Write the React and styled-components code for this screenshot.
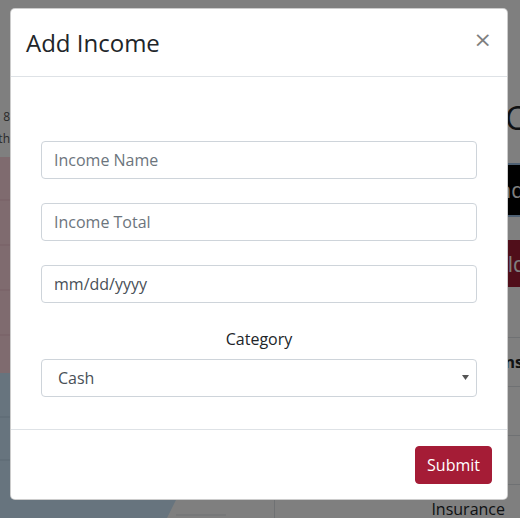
import React from "react";
import styled, { createGlobalStyle } from "styled-components";

const Global = createGlobalStyle`
  html, body { margin: 0; padding: 0; }
  body {
    width: 520px;
    height: 518px;
    overflow: hidden;
    background: #fff;
    font-family: "Segoe UI", "Open Sans", "Noto Sans", sans-serif;
    color: #212529;
  }
  #root { width: 520px; height: 518px; position: relative; overflow: hidden; }
`;

/* ---------- background page ---------- */
const Page = styled.div`
  display: flex;
  align-items: flex-start;
  width: 780px;
`;

const LeftCol = styled.div`
  width: 275px;
  flex-shrink: 0;
  padding-top: 106px;
  box-sizing: border-box;
  display: flex;
  flex-direction: column;
`;

const LegendItem = styled.div`
  width: 10px;
  display: flex;
  justify-content: flex-end;
  white-space: nowrap;
  font-size: 12px;
  line-height: 22px;
  color: #555;
`;

const Chart = styled.svg`
  display: block;
  flex-shrink: 0;
  margin-top: 7px;
`;

const RightCol = styled.div`
  flex: 1;
  display: flex;
  flex-direction: column;
  padding-top: 96px;
`;

const Heading = styled.h2`
  margin: 0 0 0 230px;
  font-size: 32px;
  line-height: 44px;
  font-weight: 500;
  white-space: nowrap;
  flex-shrink: 0;
`;

const BgButton = styled.div`
  flex-shrink: 0;
  margin: ${(p) => p.$mt}px 0 0 150px;
  width: 260px;
  height: ${(p) => p.$h}px;
  box-sizing: border-box;
  padding-left: ${(p) => p.$pl}px;
  background: ${(p) => p.$bg};
  color: #fff;
  font-size: 21px;
  display: flex;
  align-items: center;
  border-radius: 4px;
  white-space: nowrap;
  box-shadow: ${(p) => (p.$ring ? "0 0 0 2px #9cc0e6" : "none")};
`;

const Table = styled.div`
  flex-shrink: 0;
  margin-top: 50px;
  display: flex;
  flex-direction: column;
`;

const Row = styled.div`
  height: 48px;
  flex-shrink: 0;
  border-top: 1px solid #dee2e6;
  border-left: ${(p) => (p.$edge ? "1px solid #dee2e6" : "0")};
  margin-left: ${(p) => (p.$edge ? "-1px" : "0")};
  display: flex;
  align-items: center;
  font-weight: ${(p) => (p.$head ? 700 : 400)};
  font-size: 16px;
  white-space: nowrap;
`;

const Cell = styled.div`
  width: ${(p) => p.$w}px;
  flex-shrink: 0;
  text-align: ${(p) => p.$align || "left"};
`;

const Backdrop = styled.div`
  position: absolute;
  inset: 0;
  background: rgba(0, 0, 0, 0.5);
`;

/* ---------- modal ---------- */
const Modal = styled.div`
  position: absolute;
  top: 8px;
  left: 10px;
  width: 498px;
  background: #fff;
  border: 1px solid rgba(0, 0, 0, 0.2);
  border-radius: 5px;
  box-sizing: border-box;
  display: flex;
  flex-direction: column;
`;

const Header = styled.div`
  display: flex;
  align-items: flex-start;
  justify-content: space-between;
  padding: 16px 16px 15px 15px;
  border-bottom: 1px solid #dee2e6;
`;

const Title = styled.h5`
  margin: 0;
  font-size: 24px;
  line-height: 36px;
  font-weight: 500;
  color: #212529;
`;

const Close = styled.button`
  border: 0;
  background: transparent;
  padding: 0;
  margin: -3px -1px 0 0;
  font-family: "DejaVu Sans", sans-serif;
  font-size: 22px;
  line-height: 36px;
  font-weight: 400;
  color: #000;
  opacity: 0.5;
  cursor: pointer;
`;

const Body = styled.form`
  padding: 64px 30px 32px 30px;
  display: flex;
  flex-direction: column;
  gap: 24px;
`;

const Field = styled.div`
  display: flex;
  flex-direction: column;
`;

const Label = styled.label`
  text-align: center;
  font-size: 16px;
  line-height: 24px;
  margin-bottom: 8px;
  color: #212529;
`;

const Input = styled.input`
  box-sizing: border-box;
  height: 38px;
  width: 100%;
  padding: 6px 12px;
  font-family: inherit;
  font-size: 16px;
  line-height: 24px;
  color: #495057;
  border: 1px solid #ced4da;
  border-radius: 4px;
  background: #fff;
  outline: none;
  &::placeholder {
    color: ${(p) => (p.$darkHint ? "#495057" : "#6c757d")};
    opacity: 1;
  }
`;

const SelectWrap = styled.div`
  position: relative;
`;

const Select = styled.select`
  box-sizing: border-box;
  height: 38px;
  width: 100%;
  padding: 6px 12px 6px 16px;
  font-family: inherit;
  font-size: 16px;
  color: #495057;
  border: 1px solid #ced4da;
  border-radius: 4px;
  background: #fff;
  appearance: none;
  -webkit-appearance: none;
  outline: none;
`;

const Arrow = styled.svg`
  position: absolute;
  right: 8px;
  top: 16px;
  pointer-events: none;
`;

const Footer = styled.div`
  border-top: 1px solid #dee2e6;
  padding: 16px 15px 15px 16px;
  display: flex;
  justify-content: flex-end;
`;

const Submit = styled.button`
  height: 38px;
  padding: 6px 11px;
  font-family: inherit;
  font-size: 16px;
  line-height: 24px;
  color: #fff;
  background: #a51c36;
  border: 1px solid #a51c36;
  border-radius: 4px;
  cursor: pointer;
`;

export default function App() {
  return (
    <>
      <Global />
      <Page>
        <LeftCol>
          <LegendItem>Food &amp; 8</LegendItem>
          <LegendItem>Health</LegendItem>
          <Chart width="275" height="361" viewBox="0 0 275 361">
            <rect x="0" y="0" width="275" height="216" fill="#ffd6df" />
            <line x1="0" y1="43" x2="275" y2="43" stroke="#eebfca" />
            <line x1="0" y1="88" x2="275" y2="88" stroke="#eebfca" />
            <line x1="0" y1="133" x2="275" y2="133" stroke="#eebfca" />
            <line x1="0" y1="178" x2="275" y2="178" stroke="#eebfca" />
            <path d="M0 216 L275 216 L275 333 L181 333 L167 361 L0 361 Z" fill="#cfe9fd" />
            <line x1="0" y1="260" x2="275" y2="260" stroke="#b6d0e4" />
            <line x1="0" y1="303" x2="275" y2="303" stroke="#b6d0e4" />
            <line x1="176" y1="358" x2="226" y2="358" stroke="#dee2e6" />
          </Chart>
        </LeftCol>
        <RightCol>
          <Heading>Current Balance</Heading>
          <BgButton $bg="#000" $h={50} $mt={25} $pl={58} $ring>
            Undo Entry
          </BgButton>
          <BgButton $bg="#a01c34" $h={47} $mt={25} $pl={51}>
            Build Report
          </BgButton>
          <Table>
            <Row $head>
              <Cell $w={248} $align="right">Transactions</Cell>
            </Row>
            <Row>
              <Cell $w={230} $align="right">Paycheck</Cell>
              <Cell $w={40} />
              <Cell $w={200}>$1,200</Cell>
            </Row>
            <Row>
              <Cell $w={230} $align="right">Rent</Cell>
              <Cell $w={40} />
              <Cell $w={200}>$800</Cell>
            </Row>
            <Row $edge>
              <Cell $w={230} $align="right">Insurance</Cell>
              <Cell $w={40} />
              <Cell $w={200}>$120</Cell>
            </Row>
          </Table>
        </RightCol>
      </Page>
      <Backdrop />
      <Modal role="dialog">
        <Header>
          <Title>Add Income</Title>
          <Close type="button" aria-label="Close">×</Close>
        </Header>
        <Body>
          <Input type="text" placeholder="Income Name" />
          <Input type="text" placeholder="Income Total" />
          <Input type="text" placeholder="mm/dd/yyyy" $darkHint />
          <Field>
            <Label>Category</Label>
            <SelectWrap>
              <Select defaultValue="Cash">
                <option>Cash</option>
                <option>Paycheck</option>
                <option>Other</option>
              </Select>
              <Arrow width="7" height="5" viewBox="0 0 7 5">
                <path d="M0 0 L7 0 L3.5 5 Z" fill="#555" />
              </Arrow>
            </SelectWrap>
          </Field>
        </Body>
        <Footer>
          <Submit type="button">Submit</Submit>
        </Footer>
      </Modal>
    </>
  );
}
